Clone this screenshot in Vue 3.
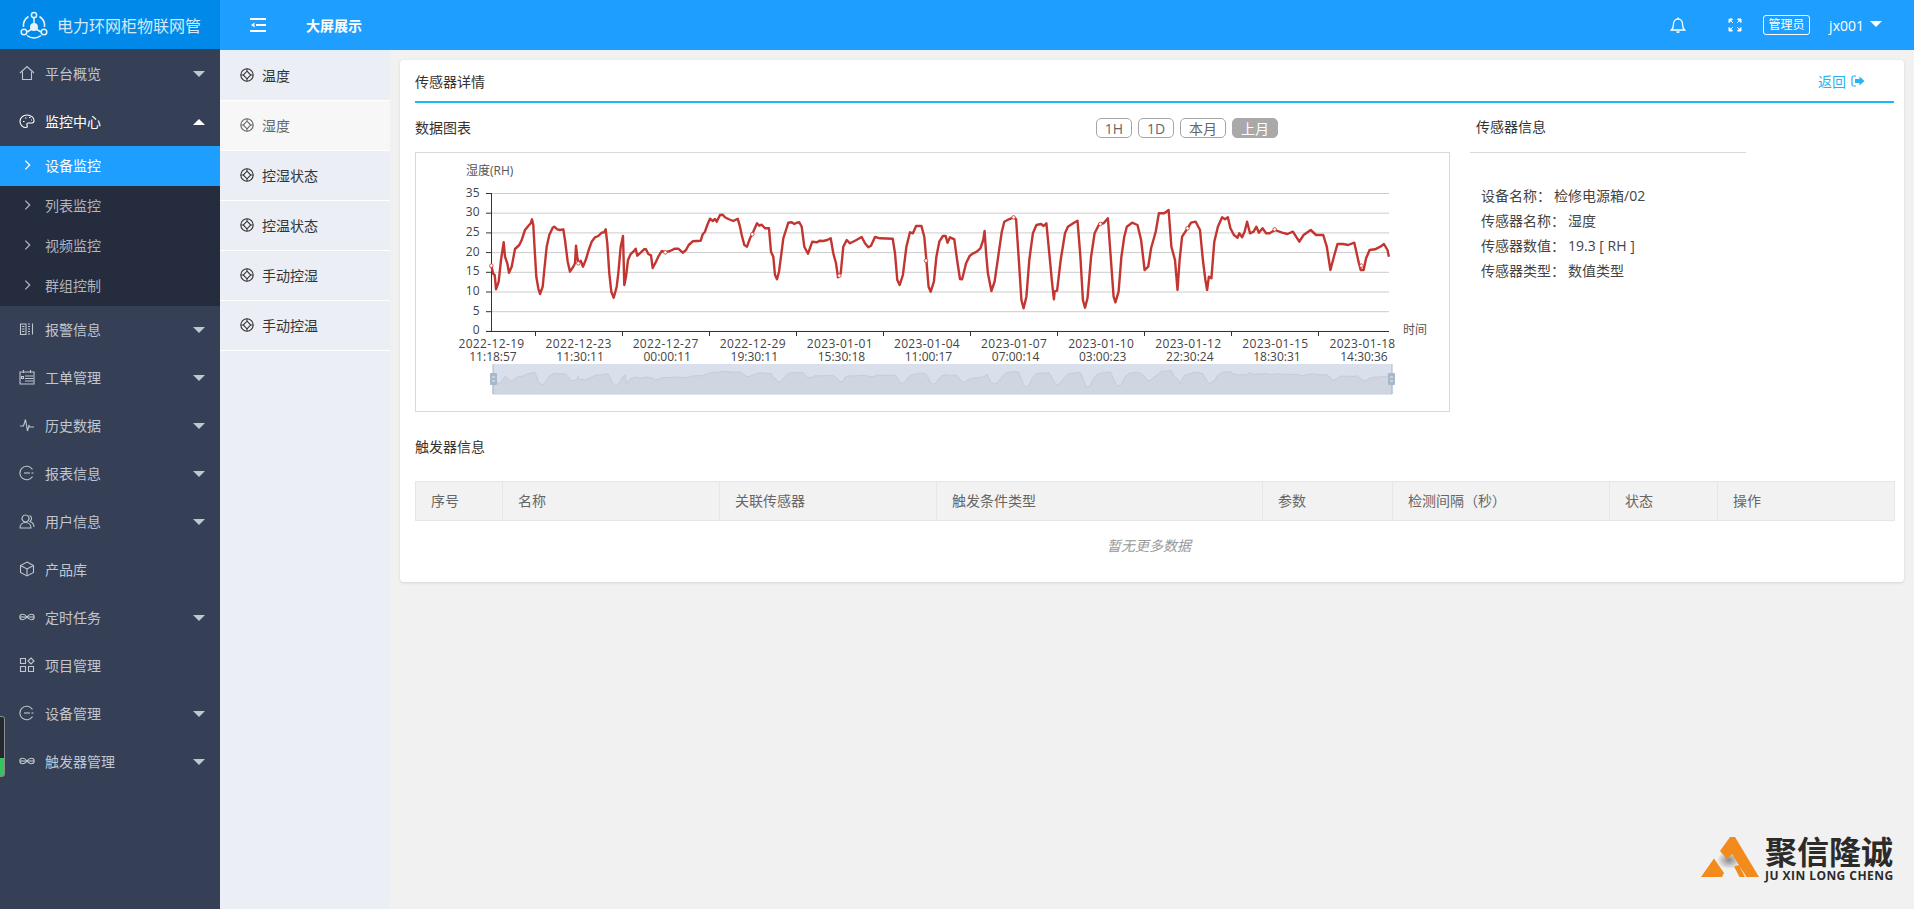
<template>
  <div class="app">
    <aside class="side">
      <div class="logo">
        <svg class="logo-mark" viewBox="0 0 28 28" fill="none" stroke="currentColor" stroke-width="1.5">
          <path d="M8.500 5.500A11 11 0 0 0 3.500 16M19.500 5.500A11 11 0 0 1 24.500 16M7 24.500a11 11 0 0 0 14 0" />
          <circle cx="14" cy="4" r="2.600" />
          <circle cx="4" cy="21" r="2.800" />
          <circle cx="24" cy="21" r="2.800" />
          <path d="M14 7v7M7 21l5-3M21 21l-5-3" />
          <circle cx="14" cy="16" r="3.200" fill="currentColor" />
        </svg>
        <span>电力环网柜物联网管</span>
      </div>
      <nav class="menu">
        <template v-for="item in menu" :key="item.name">
          <div class="menu-item" :class="{ open: item.children }">
            <svg class="menu-icon" viewBox="0 0 16 16">
              <path v-for="d in icons[item.icon]" :key="d" :d="d" />
            </svg>
            <span>{{ item.name }}</span>
            <i v-if="item.arrow" class="caret" :class="{ up: item.children }"></i>
          </div>
          <div v-if="item.children" class="submenu">
            <div v-for="(sub, i) in item.children" :key="sub" class="sub-item" :class="{ active: i === 0 }">
              <svg class="chev" viewBox="0 0 8 12"><path d="M1.500 1l5 5-5 5" /></svg>
              <span>{{ sub }}</span>
            </div>
          </div>
        </template>
      </nav>
    </aside>

    <div class="main">
      <header class="top">
        <svg class="fold" viewBox="0 0 16 14">
          <path d="M0 1h16M6 7h10M0 13h16" />
          <path class="fold-arrow" d="M4.500 4.500L1 7l3.500 2.500z" />
        </svg>
        <span class="top-link">大屏展示</span>
        <div class="top-right">
          <svg class="bell" viewBox="0 0 16 16">
            <path d="M1.500 13h13c-1.500-1.500-2-2.500-2-6 0-3-2-5-4.500-5S3.500 4 3.500 7c0 3.500-.5 4.500-2 6zM6.500 14.500c.8.8 2.200.8 3 0M8 .5V2" />
          </svg>
          <svg class="expand" viewBox="0 0 14 14">
            <path d="M1 4.500V1h3.500L1 4.500zM13 4.500V1H9.500L13 4.500zM1 9.500V13h3.500L1 9.500zM13 9.500V13H9.500L13 9.500z" />
            <path d="M2 2l3 3M12 2L9 5M2 12l3-3M12 12L9 9" />
          </svg>
          <span class="role">管理员</span>
          <span class="user">jx001</span>
          <i class="caret user-caret"></i>
        </div>
      </header>

      <div class="body">
        <div class="sensors">
          <div v-for="(s, i) in sensors" :key="i" class="sensor" :class="{ active: i === 1 }">
            <svg class="sensor-icon" viewBox="0 0 14 14">
              <circle cx="7" cy="7" r="6.200" />
              <path d="M7 3.200L10.800 7 7 10.800 3.200 7zM7 .8v2.400M7 10.800v2.400M.8 7h2.400M10.800 7h2.400" />
            </svg>
            <span>{{ s }}</span>
          </div>
        </div>

        <div class="content">
          <section class="card">
            <div class="card-head">
              <span>传感器详情</span>
              <a class="back">
                返回
                <svg viewBox="0 0 14 12">
                  <path class="back-box" d="M5 1H2.500A1.500 1.500 0 0 0 1 2.500v7A1.500 1.500 0 0 0 2.500 11H5" />
                  <path class="back-arrow" d="M4 4h4.500V1.500L13.500 6l-5 4.500V8H4z" />
                </svg>
              </a>
            </div>

            <div class="detail">
              <div class="chart-col">
                <div class="chart-head">
                  <span class="chart-title">数据图表</span>
                  <div class="ranges">
                    <button v-for="r in ranges" :key="r.label" class="range" :class="[r.size, { active: r.label === '上月' }]">{{ r.label }}</button>
                  </div>
                </div>
                <div class="chart-box">
                  <svg class="chart" width="1033" height="258" viewBox="416 153 1033 258">
                    <text class="axis-name" x="466" y="175">湿度(RH)</text>
                    <text class="axis-name" x="1403" y="334">时间</text>

                    <g v-for="t in yTicks" :key="t.label">
                      <line class="grid" :x1="491" :x2="1389" :y1="t.y" :y2="t.y" />
                      <line class="axis" x1="486" x2="491" :y1="t.y" :y2="t.y" />
                      <text class="y-label" x="479.500" :y="t.y + 3">{{ t.label }}</text>
                    </g>
                    <line class="axis" x1="491.500" x2="491.500" y1="193" y2="332" />
                    <line class="axis" x1="486" x2="1389" y1="331.500" y2="331.500" />
                    <line v-for="x in xTicks" :key="x" class="axis" :x1="x" :x2="x" y1="331" y2="336" />
                    <text v-for="(l, i) in xLabels" :key="l[0]" class="x-label">
                      <tspan class="x-date" :x="491.500 + i * 87.100" y="348">{{ l[0] }}</tspan>
                      <tspan :x="493 + i * 87.100" y="360.500">{{ l[1] }}</tspan>
                    </text>

                    <polyline class="series" :points="linePoints" />
                    <circle v-for="(p, i) in markers" :key="i" class="mark" :cx="p[0]" :cy="p[1]" r="1.800" />

                    <rect class="slider-bg" x="493" y="364" width="899" height="30" />
                    <polygon class="slider-area" :points="sliderPoints" />
                    <line class="slider-edge" x1="493" x2="493" y1="364" y2="394" />
                    <line class="slider-edge" x1="1392" x2="1392" y1="364" y2="394" />
                    <g v-for="x in [490, 1388]" :key="x">
                      <rect class="handle" :x="x" y="373" width="7" height="12" rx="1" />
                      <line class="handle-line" :x1="x + 2" :x2="x + 5" y1="377" y2="377" />
                      <line class="handle-line" :x1="x + 2" :x2="x + 5" y1="381" y2="381" />
                    </g>
                  </svg>
                </div>
              </div>

              <div class="info-col">
                <div class="info-head">传感器信息</div>
                <div class="info-list">
                  <p v-for="row in info" :key="row[0]">{{ row[0] }}：<span>{{ row[1] }}</span></p>
                </div>
              </div>
            </div>

            <div class="section-title">触发器信息</div>
            <table class="table">
              <colgroup>
                <col v-for="c in columns" :key="c.name" :width="c.width" />
              </colgroup>
              <thead>
                <tr><th v-for="c in columns" :key="c.name">{{ c.name }}</th></tr>
              </thead>
              <tbody>
                <tr><td class="empty" :colspan="columns.length">暂无更多数据</td></tr>
              </tbody>
            </table>
          </section>
        </div>
      </div>
    </div>

    <div class="dock"></div>

    <div class="brand">
      <svg viewBox="0 0 60 42" width="60" height="42">
        <defs>
          <radialGradient id="brandShade">
            <stop offset="0" stop-color="#8a8a8a" />
            <stop offset="1" stop-color="#8a8a8a" stop-opacity="0" />
          </radialGradient>
        </defs>
        <ellipse cx="28" cy="23" rx="12" ry="9" fill="url(#brandShade)" />
        <path fill="#f28a1c" d="M0 40L13 21.500 23 36 21 40zM19 14L29 0h5L58 40H45.500L31 17 26 22zM33 29.500l5-1.500 6 12h-5.500z" />
      </svg>
      <div class="brand-text">
        <div class="brand-cn">聚信隆诚</div>
        <div class="brand-en">JU XIN LONG CHENG</div>
      </div>
    </div>
  </div>
</template>

<script setup>
const icons = {
  home: ['M1 8l7-6.500L15 8', 'M3.500 6.500v8h9v-8'],
  palette: ['M8 2C4 2 1 5 1 8.500S4 14.500 7 14.500c1.500 0 1.500-1.200 1-2.200s0-2.300 1.500-2.300H13c1.500 0 2-1 2-2.500C15 4.500 12 2 8 2z', 'M4 8.500h1.500M6 5h1.500M10 4.500h1.500M12 7h1'],
  alarm: ['M1.500 3h5.500v10.500H1.500z', 'M3 5.500h2.500M3 8h2.500M3 10.500h2.500', 'M9 3h2M9 5.500h2M9 8h2M9 10.500h2M9 13h2', 'M13.500 2.500v11'],
  order: ['M1 3h14v12H1z', 'M4.500 1v3M11.500 1v3', 'M6 7h8M6 9.500h8M6 12h8', 'M2.500 7.500h2v2h-2z'],
  pulse: ['M1 9h3.500L6.500 2.500 8.500 14l1.500-5.500 1 1.500h4'],
  report: ['M13.500 4.500A6.800 6.800 0 1 0 13.500 11.500', 'M5 8h6', 'M12.500 8h2'],
  user: ['M6.500 2a3.500 3.500 0 1 0 .01 0z', 'M1 15c0-3 2-5.500 5.500-5.500S12 12 12 15z', 'M10.500 2.500c2.500 1 2.800 4.500.5 6 2.500 1 4 3 4 5.500'],
  cube: ['M8 1l6.500 3.500v7L8 15l-6.500-3.500v-7z', 'M1.500 4.500L8 8l6.500-3.500', 'M8 8v7'],
  loop: ['M8 8C6.500 6 5 5.300 3.500 5.300a2.700 2.700 0 0 0 0 5.400C5 10.700 6.500 10 8 8s3-2.700 4.500-2.700a2.700 2.700 0 0 1 0 5.400C11 10.700 9.500 10 8 8z', 'M1 8h14'],
  grid: ['M1.500 1.500h5v5h-5z', 'M1.500 9.500h5v5h-5z', 'M9.500 9.500h5v5h-5z', 'M12 1l3 3-3 3-3-3z'],
}

const menu = [
  { name: '平台概览', icon: 'home', arrow: true },
  { name: '监控中心', icon: 'palette', arrow: true, children: ['设备监控', '列表监控', '视频监控', '群组控制'] },
  { name: '报警信息', icon: 'alarm', arrow: true },
  { name: '工单管理', icon: 'order', arrow: true },
  { name: '历史数据', icon: 'pulse', arrow: true },
  { name: '报表信息', icon: 'report', arrow: true },
  { name: '用户信息', icon: 'user', arrow: true },
  { name: '产品库', icon: 'cube' },
  { name: '定时任务', icon: 'loop', arrow: true },
  { name: '项目管理', icon: 'grid' },
  { name: '设备管理', icon: 'report', arrow: true },
  { name: '触发器管理', icon: 'loop', arrow: true },
]

const sensors = ['温度', '湿度', '控湿状态', '控温状态', '手动控湿', '手动控温']

const ranges = [
  { label: '1H', size: 'sm' },
  { label: '1D', size: 'sm' },
  { label: '本月', size: 'lg' },
  { label: '上月', size: 'lg' },
]

const info = [
  ['设备名称', '检修电源箱/02'],
  ['传感器名称', '湿度'],
  ['传感器数值', '19.3 [ RH ]'],
  ['传感器类型', '数值类型'],
]

const columns = [
  { name: '序号', width: 87 },
  { name: '名称', width: 217 },
  { name: '关联传感器', width: 217 },
  { name: '触发条件类型', width: 326 },
  { name: '参数', width: 130 },
  { name: '检测间隔（秒）', width: 217 },
  { name: '状态', width: 108 },
  { name: '操作', width: 177 },
]

const yTicks = [35, 30, 25, 20, 15, 10, 5, 0].map((v, i) => ({ label: v, y: 193.5 + i * 19.7 }))
const xTicks = Array.from({ length: 10 }, (_, i) => 535.5 + i * 87)
const xLabels = [
  ['2022-12-19', '11:18:57'], ['2022-12-23', '11:30:11'], ['2022-12-27', '00:00:11'],
  ['2022-12-29', '19:30:11'], ['2023-01-01', '15:30:18'], ['2023-01-04', '11:00:17'],
  ['2023-01-07', '07:00:14'], ['2023-01-10', '03:00:23'], ['2023-01-12', '22:30:24'],
  ['2023-01-15', '18:30:31'], ['2023-01-18', '14:30:36'],
]

// traced from the two crops, flat x,y lists
const left = [274,647,280,672,284,675,288,718,296,695,303,630,311,577,315,620,322,640,327,668,335,650,345,597,358,585,365,570,375,540,385,528,392,520,396,508,400,525,404,600,409,680,415,715,420,732,428,710,433,660,440,590,448,555,458,533,463,530,472,538,480,540,490,538,495,570,503,635,510,665,520,650,525,640,528,587,532,620,535,640,542,632,549,650,558,628,566,600,575,575,585,562,595,558,605,548,612,547,617,538,622,580,628,670,634,725,641,743,650,710,655,670,662,590,669,558,673,705,678,680,684,630,692,612,700,605,707,596,712,617,722,608,732,598,738,598,745,612,753,616,758,654,768,635,775,620,785,603,796,607,810,603,825,596,835,596,848,608,858,600,866,585,878,574,890,573,902,572,908,553,915,545,922,525,930,506,938,513,945,507,950,515,960,495,968,494,975,502,985,507,1000,513,1013,506,1020,530,1025,555,1033,585,1041,590,1050,565,1060,545,1071,520,1078,527,1085,524,1095,535,1107,535,1113,605,1120,620,1125,675,1131,688,1137,665,1143,620,1150,565,1158,540,1165,518,1175,517,1183,522,1190,518,1198,517,1205,530,1213,590,1224,611,1237,575,1250,577,1260,572,1270,573,1282,570,1292,565,1300,610,1308,640,1314,682,1322,670,1330,590,1340,570,1350,580,1365,572,1385,561,1395,580,1405,592,1413,587,1425,561,1440,565,1478,566,1485,610,1492,690,1499,705]
const right = [8,525,18,440,28,397,36,400,45,378,60,378,68,410,74,482,80,560,86,575,95,545,102,470,110,425,120,408,128,408,133,428,140,412,152,418,160,480,168,537,174,538,185,490,195,468,205,460,215,455,225,445,233,420,237,393,241,460,246,520,256,573,265,545,275,470,285,395,292,365,305,358,318,352,325,358,332,470,340,600,346,625,354,590,362,480,372,400,382,375,395,372,402,378,410,370,418,460,425,540,431,598,433,575,440,572,450,480,462,400,470,380,485,370,497,362,505,470,512,600,518,623,525,595,535,470,545,400,558,372,570,370,582,355,590,470,598,590,603,607,612,575,620,470,628,410,635,380,650,368,665,375,675,420,685,510,695,500,703,445,716,395,725,340,740,340,752,330,760,440,770,480,777,570,783,480,790,410,805,385,815,368,828,365,840,390,848,480,855,540,860,570,865,530,872,535,880,425,890,380,902,352,910,358,918,352,925,385,935,405,945,413,950,400,958,412,965,395,972,365,980,400,990,395,998,380,1005,398,1015,385,1025,400,1035,400,1050,390,1070,398,1085,402,1100,395,1118,425,1130,405,1150,390,1165,405,1185,405,1195,440,1205,510,1215,470,1225,432,1240,432,1255,435,1272,428,1285,490,1290,510,1298,510,1305,475,1315,450,1330,448,1345,440,1355,432,1365,450,1369,470]

const fromLeft = (x, y) => [400 + x / 3, 50 + y / 3]
const fromRight = (x, y) => [900 + x / 2.8, 100 + y / 3]

const series = []
for (let i = 0; i < left.length; i += 2) series.push(fromLeft(left[i], left[i + 1]))
for (let i = 0; i < right.length; i += 2) series.push(fromRight(right[i], right[i + 1]))

const linePoints = series.map(p => p[0].toFixed(1) + ',' + p[1].toFixed(1)).join(' ')

const markers = [
  fromLeft(274, 647), fromLeft(535, 640), fromLeft(796, 607), fromLeft(1057, 553), fromLeft(1318, 677),
  fromRight(73, 482), fromRight(318, 352), fromRight(561, 372), fromRight(805, 385), fromRight(1049, 388), fromRight(1292, 497),
]

// the slider repeats the series, squeezed into its own 30px band
const sliderPoints = [
  '493,394',
  ...series.map(p => (493 + (p[0] - 491) * 1.0011).toFixed(1) + ',' + (371 + (p[1] - 213) * 0.169).toFixed(1)),
  '1392,394',
].join(' ')
</script>

<style>
html, body { margin: 0; background: #f1f1f1; }
</style>

<style scoped>
.app {
  position: relative; display: flex; height: 909px; overflow: hidden;
  font-family: "Open Sans", "Noto Sans CJK SC", sans-serif; font-size: 14px; color: #333;
}

.side { width: 220px; flex: none; background: #353f55; }
.logo {
  height: 49px; display: flex; align-items: center; padding-left: 20px;
  background: #0089e9; color: #d3e9fb; font-size: 16px;
}
.logo-mark { width: 28px; height: 28px; margin-right: 9px; color: #e6f3fd; }

.menu-item {
  height: 48px; box-sizing: border-box; display: flex; align-items: center; padding: 0 0 2px 19px;
  color: #c2c6cf; position: relative;
}
.menu-item:first-child { margin-top: 1px; }
.menu-item.open { color: #fff; }
.menu-icon {
  width: 16px; height: 16px; margin-right: 10px; flex: none;
  fill: none; stroke: currentColor; stroke-width: 1.100;
}
.caret {
  width: 0; height: 0; border-left: 6px solid transparent; border-right: 6px solid transparent;
  border-top: 6px solid #c2c6cf;
}
.menu-item .caret { position: absolute; left: 193px; top: 21px; }
.caret.up { border-top: 0; border-bottom: 6px solid #fff; }

.submenu { background: #252c3e; }
.sub-item {
  height: 40px; box-sizing: border-box; display: flex; align-items: center; padding: 0 0 2px 24px; color: #b2b5bc;
}
.sub-item.active { background: #1e9fff; color: #fff; }
.chev {
  width: 7px; height: 12px; margin-right: 14px; fill: none;
  stroke: currentColor; stroke-width: 1.500;
}

.main { flex: 1; min-width: 0; display: flex; flex-direction: column; }
.top {
  height: 50px; flex: none; display: flex; align-items: center; background: #1e9fff; color: #fff;
}
.fold {
  width: 16px; height: 14px; margin-left: 30px; fill: none; stroke: #fff; stroke-width: 2;
}
.fold-arrow { fill: #fff; stroke: none; }
.top-link { margin-left: 40px; font-weight: 600; }
.top-right { margin-left: auto; display: flex; align-items: center; padding-right: 32px; }
.bell { width: 16px; height: 16px; fill: none; stroke: #fff; stroke-width: 1.300; }
.expand { width: 14px; height: 14px; margin-left: 42px; fill: #fff; stroke: #fff; stroke-width: 1; }
.role {
  margin-left: 21px; width: 47px; height: 20px; box-sizing: border-box; border: 1px solid #fff;
  border-radius: 3px; font-size: 12px; line-height: 17px; text-align: center;
}
.user { margin-left: 19px; }
.user-caret { margin-left: 6px; margin-top: -2px; border-top-color: #fff; }

.body { flex: 1; display: flex; min-height: 0; }
.sensors { width: 170px; flex: none; background: #ebeef4; padding-top: 1px; }
.sensor {
  height: 50px; box-sizing: border-box; padding: 0 0 2px 20px; border-bottom: 1px solid #fff;
  display: flex; align-items: center;
}
.sensor.active { background: #f7f7f7; color: #666; }
.sensor-icon {
  width: 14px; height: 14px; margin-right: 8px; fill: none; stroke: currentColor; stroke-width: 1.100;
}

.content { flex: 1; min-width: 0; padding: 10px 10px 0; }
.card {
  background: #fff; border-radius: 4px; box-shadow: 0 1px 3px rgba(0, 0, 0, .12);
  padding: 0 10px 10px 15px;
}
.card-head {
  height: 41px; display: flex; align-items: center; justify-content: space-between;
  border-bottom: 2px solid #1ab8f7;
}
.back { display: flex; align-items: center; color: #26b4f2; margin-right: 29px; padding-left: 1px; }
.back svg { width: 14px; height: 12px; margin-left: 5px; }
.back-box { fill: none; stroke: #26b4f2; stroke-width: 1.200; }
.back-arrow { fill: #26b4f2; }

.detail { display: flex; gap: 20px; }
.chart-col { width: 1035px; flex: none; }
.chart-head { height: 49px; display: flex; align-items: center; }
.chart-title { margin-top: -2px; }
.ranges { margin-left: auto; margin-right: 172px; margin-top: 1px; display: flex; gap: 6px; }
.range {
  height: 20px; padding: 0; box-sizing: border-box; background: #fff; border: 1px solid #a6a6a6;
  border-radius: 5px; color: #666; font: inherit; font-size: 14px; line-height: 17px;
}
.range.sm { width: 36px; }
.range.lg { width: 46px; }
.range.active { background: #a9a9a9; border-color: #a9a9a9; color: #fff; }

.chart-box { height: 258px; border: 1px solid #d9d9d9; }
.chart { display: block; }
.chart text { font-size: 12px; fill: #444; }
.chart .axis-name { fill: #555; }
.chart .y-label { text-anchor: end; }
.chart .x-label { text-anchor: middle; }
.chart .x-date { letter-spacing: .35px; }
.grid { stroke: #ccc; stroke-width: 1; }
.axis { stroke: #333; stroke-width: 1; }
.series { fill: none; stroke: #c23531; stroke-width: 2.400; stroke-linejoin: round; }
.mark { fill: #fff; stroke: #c23531; stroke-width: .8; }
.slider-bg { fill: #dae0eb; }
.slider-area { fill: #cfd6e1; stroke: #c4ccd9; stroke-width: 1; }
.slider-edge { stroke: #a9b8cc; stroke-width: 1; }
.handle { fill: #a7b7cc; }
.handle-line { stroke: #e8edf3; stroke-width: 1; }

.info-col { width: 276px; flex: none; }
.info-head {
  height: 47px; padding: 0 0 2px 6px; line-height: 47px; border-bottom: 1px solid #d9d9d9;
}
.info-list { padding: 30px 0 0 11px; color: #444; }
.info-list p { margin: 0; height: 25px; line-height: 25px; }
.info-list span { margin-left: 3px; }

.section-title { margin-top: 25px; line-height: 20px; margin-bottom: 24px; }
.table { width: 1479px; border-collapse: collapse; table-layout: fixed; }
.table th {
  height: 36px; padding: 0 15px 2px; background: #f2f2f2; border: 1px solid #e6e6e6;
  text-align: left; font-weight: 400; color: #666;
}
.empty { height: 48px; padding: 0 12px 3px 0; text-align: center; font-style: italic; color: #999; }

.dock {
  position: absolute; left: -2px; top: 716px; width: 5px; height: 59px; border: 1px solid #8d8d8d;
  border-radius: 0 3px 3px 0; background: linear-gradient(#23272f 0, #23272f 70%, #35c45f 70%, #35c45f 100%);
}

.brand { position: absolute; right: 21px; bottom: 30px; display: flex; align-items: flex-end; gap: 4px; }
.brand-text { width: 128px; color: #2d2a2a; font-weight: 700; margin-bottom: -4px; }
.brand-cn { font-size: 32px; line-height: 30px; white-space: nowrap; }
.brand-en { font-size: 12px; line-height: 14px; margin-top: 2px; white-space: nowrap; letter-spacing: .45px; }
</style>
